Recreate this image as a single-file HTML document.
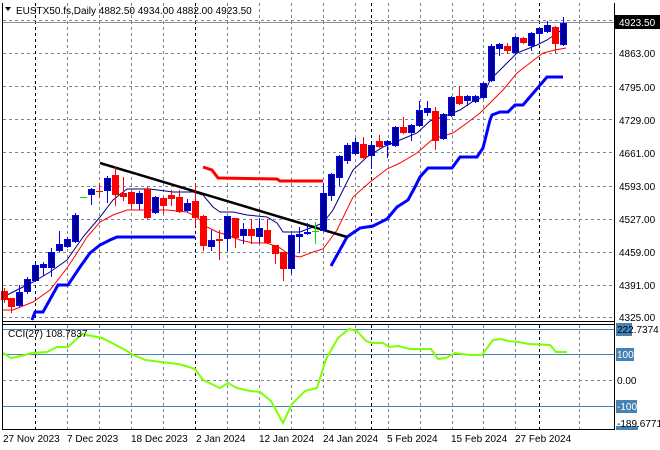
<!DOCTYPE html>
<html><head><meta charset="utf-8"><style>
html,body{margin:0;padding:0;background:#fff;width:660px;height:450px;overflow:hidden}
svg{display:block;font-family:"Liberation Sans",sans-serif;font-size:10px}
</style></head><body>
<svg id="s" width="660" height="450" xmlns="http://www.w3.org/2000/svg">
<rect width="660" height="450" fill="#fff"/>
<g id="grid" stroke="#7a8490" stroke-dasharray="3,3" stroke-width="1"></g>
<g id="vgrid"></g>
<line x1="3" y1="329.5" x2="614" y2="329.5" stroke="#4682b4"/>
<line x1="3" y1="354.5" x2="614" y2="354.5" stroke="#4682b4"/>
<line x1="3" y1="380.5" x2="614" y2="380.5" stroke="#7a8490" stroke-dasharray="3,3"/>
<line x1="3" y1="406.5" x2="614" y2="406.5" stroke="#4682b4"/>
<line x1="3" y1="22.5" x2="614" y2="22.5" stroke="#8a9298"/>
<polyline fill="none" stroke="#ff0000" stroke-width="3" points="203,167 212,170 218,178 277,179 280,181 323,181"/>
<polyline fill="none" stroke="#0000ff" stroke-width="3" points="32,320 35,312 43,312 58,285 68,285 80,267 90,253 100,245 110,240 117,237 195,237"/>
<polyline fill="none" stroke="#0000ff" stroke-width="3" points="331,266 347,237 360,228 373,226 387,219 397,207 408,200 415,187 420,177 428,168 452,168 460,157 477,157 483,148 490,120 492,115 500,112 508,112 515,105 523,105 547,77 563,77"/>
<polyline fill="none" stroke="#ff0000" stroke-width="1" points="3,310 13,310 33,302 50,290 67,268 77,253 87,237 100,222 113,215 127,210 167,210 187,212 197,217 207,227 217,232 227,235 240,240 253,243 267,243 280,248 290,255 300,257 313,252 323,249 337,230 353,197 370,182 387,169 400,163 417,153 433,139 453,133 467,123 480,113 490,103 503,90 517,73 530,63 543,53 555,50 566,48"/>
<polyline fill="none" stroke="#000080" stroke-width="1" points="3,297 33,282 50,272 67,260 83,237 100,217 113,200 127,189 150,189 173,192 193,192 203,195 213,207 220,212 233,212 247,215 267,217 277,223 283,232 300,232 313,227 323,223 333,210 343,190 353,170 367,157 383,147 400,140 417,133 430,121 443,117 460,110 475,100 483,97 490,80 503,67 517,53 537,45 547,40 563,29"/>
<line x1="100" y1="163" x2="347" y2="237" stroke="#000" stroke-width="2.5"/>
<g id="candles"></g>
<polyline fill="none" stroke="#7fff00" stroke-width="2" points="3,353 11,358 21,356 32,353 47,352 57,347 68,347 82,334 102,338 114,344 127,351 133,355 146,360 161,362 178,364 186,366 195,369 203,380 220,388 228,383 237,388 250,391 260,392 271,401 283,423 292,404 305,391 317,388 326,359 338,338 349,329 357,331 366,341 372,343 383,343 389,347 398,346 410,349 431,349 438,359 446,358 455,353 470,355 482,355 493,340 501,339 508,341 518,342 529,344 550,345 556,352 567,352"/>
<line x1="2.5" y1="3" x2="2.5" y2="430" stroke="#000"/>
<line x1="614.5" y1="3" x2="614.5" y2="430" stroke="#000"/>
<line x1="2" y1="321.5" x2="615" y2="321.5" stroke="#000"/>
<line x1="2" y1="324.5" x2="615" y2="324.5" stroke="#000"/>
<line x1="2" y1="429.5" x2="615" y2="429.5" stroke="#000"/>
<polygon points="5,7 11,7 8,11" fill="#000"/>
<text x="16" y="14" fill="#000">EUSTX50.fs,Daily  4882.50 4934.00 4882.00 4923.50</text>
<text x="8" y="337" fill="#000">CCI(27) 108.7837</text>
<g fill="#000">
<text x="619" y="57">4863.00</text>
<text x="619" y="91">4795.00</text>
<text x="619" y="124">4729.00</text>
<text x="619" y="157">4661.00</text>
<text x="619" y="190">4593.00</text>
<text x="619" y="223">4527.00</text>
<text x="619" y="256">4459.00</text>
<text x="619" y="289">4391.00</text>
<text x="619" y="321">4325.00</text>
</g>
<rect x="615" y="15" width="45" height="14" fill="#000"/>
<text x="619" y="26" fill="#fff">4923.50</text>
<rect x="616" y="323" width="16" height="13" fill="#4682b4"/>
<text x="617" y="333" fill="#000">222.7374</text>
<rect x="616" y="348" width="18" height="13" fill="#4682b4"/>
<text x="617" y="358" fill="#fff">100</text>
<text x="617" y="384" fill="#000">0.00</text>
<rect x="616" y="400" width="21" height="13" fill="#4682b4"/>
<text x="617" y="410" fill="#fff">-100</text>
<rect x="616" y="426" width="22" height="4" fill="#4682b4"/>
<text x="617" y="427" fill="#000">-189.6771</text>
<g fill="#000">
<text x="3" y="442">27 Nov 2023</text>
<text x="67" y="442">7 Dec 2023</text>
<text x="131" y="442">18 Dec 2023</text>
<text x="196" y="442">2 Jan 2024</text>
<text x="259" y="442">12 Jan 2024</text>
<text x="323" y="442">24 Jan 2024</text>
<text x="387" y="442">5 Feb 2024</text>
<text x="451" y="442">15 Feb 2024</text>
<text x="515" y="442">27 Feb 2024</text>
</g>
</svg>
<script>
var NS="http://www.w3.org/2000/svg";
function el(p,t,a){var e=document.createElementNS(NS,t);for(var k in a)e.setAttribute(k,a[k]);p.appendChild(e);return e;}
var g=document.getElementById('grid');
[20,53,86,119,152,186,219,252,285,317].forEach(function(y){el(g,'line',{x1:3,x2:614,y1:y+.5,y2:y+.5});});
var vg=document.getElementById('vgrid');
var gx=[67,99,131,163,227,259,291,323,355,388,420,452,483,515,579],bx=[35,195,371,539];
gx.forEach(function(x){el(vg,'line',{x1:x+.5,x2:x+.5,y1:3,y2:321,stroke:'#7a8490','stroke-dasharray':'3,3'});el(vg,'line',{x1:x+.5,x2:x+.5,y1:325,y2:429,stroke:'#7a8490','stroke-dasharray':'3,3'});});
bx.forEach(function(x){el(vg,'line',{x1:x+.5,x2:x+.5,y1:3,y2:321,stroke:'#000','stroke-dasharray':'3,3'});el(vg,'line',{x1:x+.5,x2:x+.5,y1:325,y2:429,stroke:'#000','stroke-dasharray':'3,3'});});
var C=[[4,291,299,288,302,'r'],[11,298,306,298,312,'r'],[19,292,305,285,306,'b'],[27,279,291,277,293,'b'],[35,265,280,263,281,'b'],[43,264,267,262,275,'b'],[51,252,267,248,276,'b'],[59,244,250,231,251,'b'],[67,239,246,237,247,'b'],[75,215,241,213,242,'b'],[83,197,197,197,197,'g'],[91,189,194,188,204,'b'],[99,191,191,183,197,'r'],[107,178,190,176,202,'b'],[115,175,194,167,205,'r'],[123,193,196,177,200,'r'],[131,192,203,191,208,'r'],[139,193,203,191,209,'b'],[147,189,217,187,218,'r'],[155,197,212,196,213,'b'],[163,198,205,197,213,'r'],[171,195,198,190,205,'r'],[179,197,211,190,212,'r'],[187,203,210,199,211,'b'],[195,201,217,183,225,'r'],[203,216,245,215,250,'r'],[211,240,246,230,250,'b'],[219,239,240,230,259,'r'],[227,216,238,216,250,'b'],[235,218,237,218,247,'r'],[243,229,235,223,243,'b'],[251,229,235,219,243,'r'],[259,228,236,218,242,'b'],[267,230,242,219,243,'r'],[275,245,253,245,263,'r'],[283,252,268,252,280,'r'],[291,235,268,234,273,'b'],[299,234,236,227,252,'b'],[307,232,233,223,234,'b'],[315,231,231,222,243,'g'],[323,193,230,183,230,'b'],[331,174,195,173,200,'b'],[339,156,177,155,185,'b'],[347,145,160,143,163,'b'],[355,142,153,138,154,'b'],[363,144,157,137,158,'r'],[371,145,155,143,168,'b'],[379,141,146,135,147,'r'],[387,141,144,140,157,'b'],[395,127,145,126,146,'b'],[403,127,132,117,133,'r'],[411,125,132,124,140,'b'],[419,110,125,101,126,'b'],[427,108,112,101,115,'b'],[435,111,140,107,149,'r'],[443,114,138,113,139,'b'],[451,97,115,96,116,'b'],[459,96,103,86,104,'r'],[467,96,100,95,105,'b'],[475,96,101,95,102,'b'],[483,83,97,82,98,'b'],[491,46,80,44,81,'b'],[499,44,48,43,55,'b'],[507,46,50,43,53,'r'],[515,37,52,36,53,'b'],[523,38,42,37,43,'r'],[531,33,45,32,50,'b'],[539,28,33,27,43,'b'],[547,25,31,21,32,'b'],[555,27,43,26,52,'r'],[563,23,44,17,45,'b']];
var cg=document.getElementById('candles');
C.forEach(function(c){var x=c[0],col=c[5]=='r'?'#ff0000':(c[5]=='g'?'#00e000':'#0000ff');
el(cg,'line',{x1:x+.5,x2:x+.5,y1:c[3],y2:c[4]+1,stroke:col});
if(c[2]-c[1]<1){el(cg,'line',{x1:x-3,x2:x+4,y1:c[1]+.5,y2:c[1]+.5,stroke:col});}
else el(cg,'rect',{x:x-2.5,y:c[1]+.5,width:6,height:c[2]-c[1],fill:c[5]=='r'?'#ff0000':'#000090',stroke:col});});
</script>
</body></html>
